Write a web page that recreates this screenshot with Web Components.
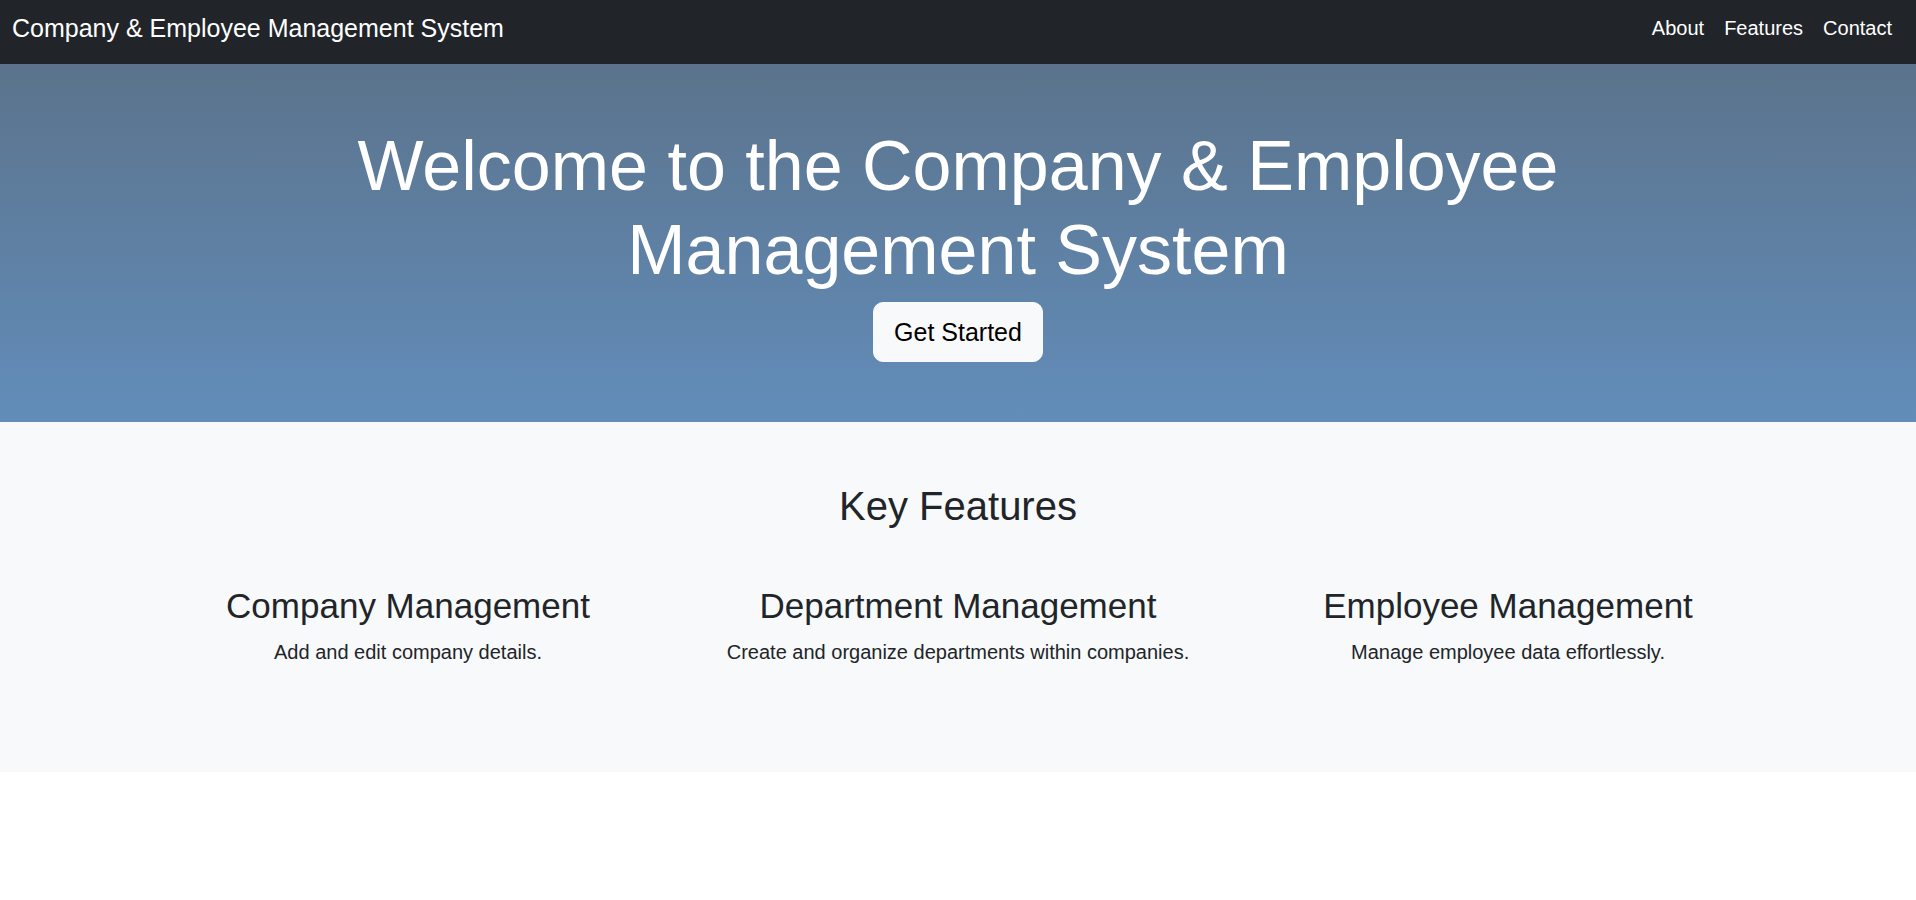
<!DOCTYPE html>
<html lang="en">
<head>
<meta charset="utf-8">
<title>Company &amp; Employee Management System</title>
<style>
body { margin: 0; background: #fff; color: #212529; font: 20px/30px "Liberation Sans", Arial, sans-serif; }
</style>
</head>
<body>
<site-nav>
  <span slot="brand">Company &amp; Employee Management System</span>
  <nav-link href="#about">About</nav-link>
  <nav-link href="#features">Features</nav-link>
  <nav-link href="#contact">Contact</nav-link>
</site-nav>
<main>
  <hero-banner>
    <span slot="title">Welcome to the Company &amp; Employee Management System</span>
    <span slot="action">Get Started</span>
  </hero-banner>
  <feature-section id="features">
    <span slot="title">Key Features</span>
    <feature-item><span slot="title">Company Management</span>Add and edit company details.</feature-item>
    <feature-item><span slot="title">Department Management</span>Create and organize departments within companies.</feature-item>
    <feature-item><span slot="title">Employee Management</span>Manage employee data effortlessly.</feature-item>
  </feature-section>
</main>
<script>
const define = (name, html, setup) => customElements.define(name, class extends HTMLElement {
  constructor() {
    super();
    this.attachShadow({ mode: "open" }).innerHTML = html;
  }
  connectedCallback() { if (setup) setup(this); }
});

define("site-nav", `
<style>
:host { display: block; background: #212529; }
header { display: flex; justify-content: space-between; align-items: center; padding: 8px 14px 16px 12px; }
.brand { color: #fff; font-size: 25px; line-height: 40px; text-decoration: none; }
nav { display: flex; }
</style>
<header><a class="brand" href="#"><slot name="brand"></slot></a><nav aria-label="Main"><slot></slot></nav></header>`);

define("nav-link", `
<style>
:host { display: block; }
a { display: block; padding: 0 10px; color: #fff; text-decoration: none; }
</style>
<a><slot></slot></a>`, el => { el.shadowRoot.querySelector("a").href = el.getAttribute("href"); });

define("hero-banner", `
<style>
:host { display: block; background: linear-gradient(#5b738c, #628dba); color: #fff; text-align: center; }
section { max-width: 1320px; margin: 0 auto; padding: 60px 0; }
h1 { margin: 0 0 10px; font-size: 70px; line-height: 84px; font-weight: 400; }
button { font: inherit; font-size: 25px; line-height: 38px; color: #000; background: #f8f9fa; border: 1px solid #f8f9fa; border-radius: 10px; padding: 10px 20px; }
</style>
<section><h1><slot name="title"></slot></h1><button type="button"><slot name="action"></slot></button></section>`);

define("feature-section", `
<style>
:host { display: block; background: #f8f9fa; text-align: center; }
section { max-width: 1650px; margin: 0 auto; padding: 60px 0; }
h2 { margin: 0 0 30px; font-size: 40px; line-height: 48px; font-weight: 400; }
.items { display: grid; grid-template-columns: repeat(3, 1fr); }
</style>
<section><h2><slot name="title"></slot></h2><div class="items"><slot></slot></div></section>`);

define("feature-item", `
<style>
:host { display: block; padding: 25px; }
h3 { margin: 0 0 10px; font-size: 35px; line-height: 42px; font-weight: 400; }
p { margin: 0 0 20px; }
</style>
<article><h3><slot name="title"></slot></h3><p><slot></slot></p></article>`);
</script>
</body>
</html>
